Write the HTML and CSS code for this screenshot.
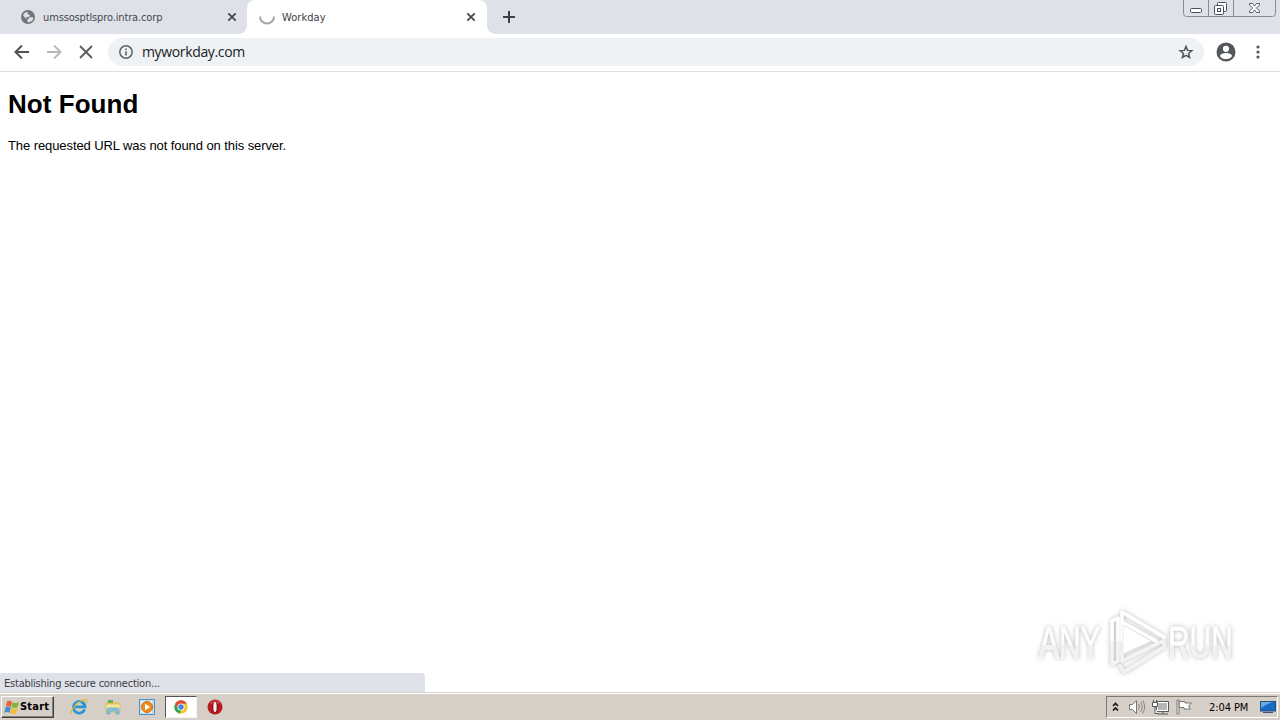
FILE: index.html
```html
<!DOCTYPE html>
<html lang="en">
<head>
<meta charset="utf-8">
<title>Workday</title>
<link rel="stylesheet" href="styles.css">
</head>
<body>
<div class="screen">
  <header class="tabstrip">
    <div class="tab tab-idle">
      <svg class="favicon" width="14" height="14" viewBox="0 0 14 14"><circle cx="7" cy="7" r="7" fill="#72767a"/><path d="M2 5l2-2.500 3-.5-.5 2L9 5 8 7H5.500L5 9zM7 9l2-2 3.500.5-1 3L8 12.500 6 11z" fill="#dee1e8"/></svg>
      <span class="tab-title title-host">umssosptlspro.intra.corp</span>
      <svg class="close" width="10" height="10" viewBox="0 0 10 10"><path d="M1.300 1.300l7.400 7.400M8.700 1.300L1.300 8.700" stroke="#45494e" stroke-width="1.800"/></svg>
    </div>
    <div class="tab tab-active">
      <svg class="spinner" width="16" height="16" viewBox="0 0 16 16"><path d="M1 7.500a7 7 0 0 0 14 0" fill="none" stroke="#a3a5a8" stroke-width="2"/></svg>
      <span class="tab-title title-work">Workday</span>
      <svg class="close" width="10" height="10" viewBox="0 0 10 10"><path d="M1.300 1.300l7.400 7.400M8.700 1.300L1.300 8.700" stroke="#45494e" stroke-width="1.800"/></svg>
    </div>
    <svg class="new-tab" width="12" height="12" viewBox="0 0 12 12"><path d="M6 0v12M0 6h12" stroke="#3c4043" stroke-width="2"/></svg>
    <svg class="caption" width="94" height="18" viewBox="0 0 94 18" fill="none"><path d="M.5 0v13.500q0 3 3 3h86q3 0 3-3V0M25.500 0v16M50.500 0v16" stroke="#898c93"/><rect x="7.500" y="8.500" width="11" height="4" rx="1" fill="#fff" stroke="#4c5058"/><g fill="#fff" stroke="#4c5058"><rect x="34.500" y="2.500" width="9" height="9" rx="1"/><rect x="31.500" y="5.500" width="9" height="9" rx="1"/><rect x="34.500" y="8.500" width="3" height="3"/></g><path d="M66.500 3.500h3l2 2.500 2-2.500h3v1.500L73.500 8l3 3v1.500h-3l-2-2.500-2 2.500h-3V11l3-3-3-3z" fill="#fff" stroke="#4c5058" stroke-width=".9"/></svg>
  </header>
  <nav class="toolbar">
    <svg class="back" width="16" height="16" viewBox="0 0 16 16"><path d="M15 8H2M8 1.500L1.500 8 8 14.500" fill="none" stroke="#505357" stroke-width="2"/></svg>
    <svg class="forward" width="16" height="16" viewBox="0 0 16 16"><path d="M1 8h13M8 1.500L14.500 8 8 14.500" fill="none" stroke="#b6b8ba" stroke-width="2"/></svg>
    <svg class="stop" width="14" height="14" viewBox="0 0 14 14"><path d="M1 1l12 12M13 1L1 13" stroke="#5a5d61" stroke-width="1.900"/></svg>
    <div class="omnibox">
      <svg width="14" height="14" viewBox="0 0 14 14"><circle cx="7" cy="7" r="6.200" fill="none" stroke="#5f6368" stroke-width="1.500"/><path d="M7 6.200v4.300M7 3.400v1.600" stroke="#5f6368" stroke-width="1.600"/></svg>
      <span class="url">myworkday.com</span>
      <svg class="star" width="16" height="16" viewBox="0 0 16 16"><path d="M8 2.500l1.600 3.900 4.200.3-3.200 2.700 1 4.100L8 11.300l-3.600 2.200 1-4.100-3.200-2.700 4.200-.3z" fill="none" stroke="#505459" stroke-width="1.500"/></svg>
    </div>
    <svg class="avatar" width="20" height="20" viewBox="0 0 20 20"><circle cx="10" cy="10" r="9.500" fill="#53565b"/><circle cx="10" cy="6.800" r="3.100" fill="#fff"/><path d="M4 14.200c0-2.500 3.500-3.300 6-3.300s6 .8 6 3.300c-1.400 1.900-3.500 2.900-6 2.900s-4.600-1-6-2.900z" fill="#fff"/></svg>
    <svg class="menu" width="4" height="14" viewBox="0 0 4 14" fill="#53565b"><circle cx="2" cy="2" r="1.600"/><circle cx="2" cy="7" r="1.600"/><circle cx="2" cy="12" r="1.600"/></svg>
  </nav>
  <main class="page">
    <h1>Not Found</h1>
    <p>The requested URL was not found on this server.</p>
    <div class="status"><span>Establishing secure connection...</span></div>
    <svg class="watermark" width="206" height="74" viewBox="0 0 206 74">
      <defs>
        <linearGradient id="fade" x1="0" y1="0" x2="0" y2="1"><stop offset=".54" stop-color="#fff"/><stop offset=".55" stop-color="#efefef"/><stop offset="1" stop-color="#f4f4f4"/></linearGradient>
        <filter id="glow" x="-10%" y="-20%" width="120%" height="140%"><feDropShadow dx="0" dy="0" stdDeviation="1.900" flood-color="#777" flood-opacity=".55"/></filter>
      </defs>
      <g filter="url(#glow)">
        <g class="wm-text" fill="url(#fade)"><text transform="translate(6 54) scale(.68 1)">ANY</text><text transform="translate(135 54) scale(.68 1)">RUN</text></g>
        <g fill="none" stroke-width="3.600" stroke-linejoin="round" stroke-linecap="round"><path d="M79 36v24l6-3M85 36v21M89 57l41-20M87 62l4 6 40-25v-8M89 36v20" stroke="#f3f3f3"/><path d="M85 36V14l-6 3v19M89 36V8l42 25M89 18l34 19" stroke="#fff"/></g>
        <path d="M90 50V21l28 16z" fill="#fff" stroke="#e9e9e9" stroke-width=".8"/>
      </g>
    </svg>
  </main>
  <footer class="taskbar">
    <div class="start">
      <svg width="16" height="15" viewBox="0 0 16 15"><path d="M3 1.500Q5.500 0 8 2L7 7Q4.500 5.300 1.800 6.700z" fill="#e86532"/><path d="M8.500 2.300q2.800 1.500 6.500 0L13.800 7Q11 8.700 7.500 7.200z" fill="#80b83f"/><path d="M1.600 7.300Q4.200 5.800 6.800 7.600l-1.100 5.300Q3.200 11.400.3 12.700z" fill="#498cce"/><path d="M7.400 7.900q2.800 1.500 6.200 0l-1.200 5.400q-2.800 1.500-6.100 0z" fill="#f3bd31"/></svg>
      <span>Start</span>
    </div>
    <div class="task"><svg width="18" height="18" viewBox="0 0 18 18"><path d="M14.600 11.500A5.800 5.800 0 1 1 15 8.800H4.500" fill="none" stroke="#2794d6" stroke-width="2.700"/><path d="M5.500 6.500Q7 4 10 4.500" fill="none" stroke="#8ed0f4"/><path d="M1.500 16.500C-.5 14 5 6 11 3c3-1.600 5.500-2 5.700-.4.1.7-.2 1.500-.7 2.300" fill="none" stroke="#e6b72c" stroke-width="1.300"/></svg></div>
    <div class="task"><svg width="18" height="18" viewBox="0 0 18 18"><path d="M2 3h6l1 1h6v9H2z" fill="#e9c75c"/><path d="M4 2h5v3H4z" fill="#5eb06b"/><path d="M2 6h14v8H2z" fill="#f8e69c" stroke="#d8b653" stroke-width=".7"/><path d="M3 16v-4q0-2 2-2h8q2 0 2 2v4h-3v-3H6v3z" fill="#88c5e4" stroke="#579dc3" stroke-width=".7"/></svg></div>
    <div class="task"><svg width="18" height="18" viewBox="0 0 18 18"><rect x="1.500" y="1.500" width="15" height="15" fill="#bcdcf1" stroke="#5294c1"/><rect x="3" y="3" width="11" height="12" fill="#e9f4fb"/><circle cx="9" cy="9" r="5.500" fill="#f18b17" stroke="#d86c0b"/><path d="M7 5.800v6.400L12.200 9z" fill="#fff"/></svg></div>
    <div class="task pressed"><svg width="16" height="16" viewBox="0 0 16 16"><circle cx="8" cy="8" r="6.700" fill="#f6c72d"/><path d="M2.200 4.700A6.700 6.700 0 0 1 13.800 4.700H8L5 9.600z" fill="#df493b"/><path d="M2.200 4.700L5 9.700 8 11l-1 3.600A6.700 6.700 0 0 1 2.200 4.700z" fill="#31a45b"/><circle cx="8" cy="8" r="3.500" fill="#fff"/><circle cx="8" cy="8" r="2.700" fill="#4684df"/></svg></div>
    <div class="task"><svg width="16" height="16" viewBox="0 0 16 16"><circle cx="8" cy="8" r="7.500" fill="#b91920"/><path d="M2.500 4Q8-2 13.500 4 8 7 2.500 4z" fill="#df5a5a" opacity=".6"/><ellipse cx="8" cy="8" rx="3" ry="6" fill="#890c14"/><ellipse cx="8" cy="8" rx="1.700" ry="5.200" fill="#f4eeee"/></svg></div>
    <div class="tray">
      <svg class="chevrons" width="7" height="10" viewBox="0 0 7 10"><path d="M1 4l2.500-2.500L6 4M1 8.500L3.500 6 6 8.500" fill="none" stroke="#111" stroke-width="1.600"/></svg>
      <svg class="speaker" width="18" height="16" viewBox="0 0 18 16"><path d="M1.500 5.500h3l4-4v13l-4-4h-3z" fill="#fff" stroke="#777"/><path d="M10.500 5q2 3 0 6M12.500 3q3.500 5 0 10M14.500 1.500q4.500 6.500 0 13" fill="none" stroke="#858585"/></svg>
      <svg class="network" width="18" height="16" viewBox="0 0 18 16"><rect x="5.500" y="3.500" width="10" height="8" fill="#b5b5b5" stroke="#fff"/><path d="M4.500 2.500h12v10h-12zM6 15h10M11 13v2" fill="none" stroke="#585858"/><path d="M1.500 1v3M4.500 1v3M.5 3.500h5v4h-5zM3 8v6.500h3" fill="#fff" stroke="#555"/></svg>
      <svg class="flag" width="17" height="16" viewBox="0 0 17 16"><path d="M1 1h2v14H1zM3 2.500h6v1.500h6.500L12.500 7l2 3H8V8.500H3z" fill="#fff" stroke="#777"/></svg>
      <span class="clock">2:04 PM</span>
      <svg class="desktop" width="16" height="14" viewBox="0 0 16 14"><rect x=".5" y="1.500" width="15" height="9.500" fill="#176bc5" stroke="#244e82"/><path d="M1 2h12Q7 4 1 8z" fill="#65a9e7"/><path d="M3 12.500h10" stroke="#41566e"/></svg>
    </div>
  </footer>
</div>
</body>
</html>
```
FILE: styles.css
```css
* { box-sizing: border-box; }
body { margin: 0; overflow: hidden; background: #fff; font-family: "Liberation Sans", Arial, sans-serif; }
svg { display: block; flex: none; }
.screen { width: 1280px; height: 720px; display: flex; flex-direction: column; }
.tabstrip { height: 34px; flex: none; display: flex; align-items: flex-start; background: #dee1e8; }
.tab { height: 34px; display: flex; align-items: center; white-space: nowrap; font: 11px/14px "DejaVu Sans Condensed", "DejaVu Sans", sans-serif; color: #45494e; }
.tab-idle { width: 247px; padding: 0 10px 0 21px; border-bottom-right-radius: 8px; }
.tab-active { width: 240px; padding: 0 11px 0 12px; background: #fff; color: #3c4043; border-radius: 8px 8px 0 0; position: relative; }
.tab-active::before, .tab-active::after { content: ""; position: absolute; bottom: 0; width: 8px; height: 8px; }
.tab-active::before { left: -8px; background: radial-gradient(circle at 0 0, transparent 7.5px, #fff 8px); }
.tab-active::after { right: -8px; background: radial-gradient(circle at 100% 0, transparent 7.5px, #fff 8px); }
.tab-title { margin-left: 8px; padding-top: 2px; }
.tab-active .tab-title { margin-left: 7px; }
.title-host { letter-spacing: -.14px; }
.title-work { letter-spacing: .05px; }
.close { margin-left: auto; }
.new-tab { margin: 11px 0 0 16px; }
.caption { margin-left: auto; margin-right: 3px; }
.toolbar { height: 38px; flex: none; display: flex; align-items: center; padding: 0 20px 1px 14px; border-bottom: 1px solid #dcdddf; background: #fff; }
.forward { margin-left: 16px; }
.stop { margin-left: 17px; }
.omnibox { width: 1096px; height: 28px; margin-left: 15px; padding: 0 10px 0 11px; display: flex; align-items: center; border-radius: 14px; background: #eff2f5; color: #202124; }
.url { margin-left: 9px; font: 14px/20px "Open Sans", "Noto Sans", sans-serif; letter-spacing: -.35px; }
.star { margin-left: auto; }
.avatar { margin-left: 12px; }
.menu { margin-left: auto; }
.page { flex: 1; min-height: 0; position: relative; padding: 0 8px; background: #fff; color: #000; }
h1 { margin: 17px 0 19px; font-size: 26px; line-height: 30px; letter-spacing: .05px; }
p { margin: 0; font-size: 13px; line-height: 16px; letter-spacing: -.085px; }
.status { position: absolute; left: 0; bottom: 0; width: 425px; height: 19px; padding: 3px 4px 1px; background: #dee1e8; border-top-right-radius: 4px; color: #3c4043; font: 11px/15px "DejaVu Sans Condensed", "DejaVu Sans", sans-serif; letter-spacing: -.22px; }
.watermark { position: absolute; left: 1033px; top: 532px; overflow: visible; }
.wm-text { font: 44px "Liberation Sans", Arial, sans-serif; stroke: #f8f8f8; stroke-width: .8px; }
.taskbar { height: 28px; flex: none; display: flex; align-items: center; padding: 1px 2px 0 1px; background: #d6cfc7; border-top: 1px solid #d6d3cc; box-shadow: inset 0 1px #fff; color: #000; }
.start { width: 53px; height: 22px; display: flex; align-items: center; padding-left: 2px; border: 1px solid; border-color: #fff #404040 #404040 #fff; box-shadow: inset -1px -1px #858078; font: bold 11px/14px "DejaVu Sans Condensed", "DejaVu Sans", sans-serif; letter-spacing: .2px; }
.task { width: 32px; height: 22px; margin-left: 2px; display: flex; align-items: center; justify-content: center; }
.start + .task { margin-left: 9px; }
.pressed { background: #fff; border: 1px solid; border-color: #555 #f7f5f2 #f7f5f2 #555; }
.tray { width: 172px; height: 22px; margin-left: auto; padding: 0 1px 0 5px; display: flex; align-items: center; border: 1px solid; border-color: #807a73 #fff #fff #807a73; font: 11px/14px "DejaVu Sans Condensed", "DejaVu Sans", sans-serif; }
.speaker { margin-left: 9px; }
.network { margin-left: 6px; }
.flag { margin-left: 6px; }
.clock { width: 40px; margin-left: 16px; padding-top: 1px; letter-spacing: -.08px; white-space: nowrap; }
.desktop { margin-left: auto; }
```
